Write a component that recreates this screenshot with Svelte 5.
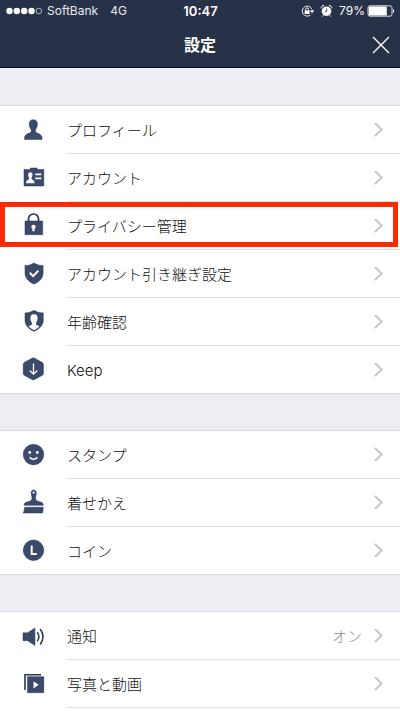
<script lang="ts">
	type Item = { icon: string; label: string; value?: string; marked?: boolean };

	const groups: Item[][] = [
		[
			{ icon: 'profile', label: 'プロフィール' },
			{ icon: 'account', label: 'アカウント' },
			{ icon: 'lock', label: 'プライバシー管理', marked: true },
			{ icon: 'transfer', label: 'アカウント引き継ぎ設定' },
			{ icon: 'age', label: '年齢確認' },
			{ icon: 'keep', label: 'Keep' }
		],
		[
			{ icon: 'stamp', label: 'スタンプ' },
			{ icon: 'theme', label: '着せかえ' },
			{ icon: 'coin', label: 'コイン' }
		],
		[
			{ icon: 'sound', label: '通知', value: 'オン' },
			{ icon: 'media', label: '写真と動画' }
		]
	];
</script>

<div class="app">
	<header>
		<div class="status">
			<div class="carrier">
				<svg width="37" height="8" viewBox="0 0 37 8" aria-hidden="true">
					<circle cx="3.5" cy="4" r="3.2" />
					<circle cx="10.8" cy="4" r="3.2" />
					<circle cx="18.2" cy="4" r="3.2" />
					<circle cx="25.5" cy="4" r="3.2" />
					<circle cx="32.8" cy="4" r="2.8" class="empty" />
				</svg>
				<span>SoftBank</span>
				<span class="network">4G</span>
			</div>
			<time>10:47</time>
			<div class="power">
				<svg width="13" height="14" viewBox="0 0 13 14" aria-hidden="true">
					<path d="M10.8 5A5 5 0 1 0 9.4 11" fill="none" stroke="#e8eaee" />
					<path d="M8.9 6.3h4.2L11 9.2z" />
					<path d="M3.6 6.4h5V10h-5z" />
					<path d="M4.6 6.6V5.4a1.5 1.5 0 0 1 3 0v1.2" fill="none" stroke="#fff" />
				</svg>
				<svg class="alarm" width="13" height="14" viewBox="0 0 13 14" aria-hidden="true">
					<circle cx="6.5" cy="7.2" r="4.8" />
					<path d="M1.2 4.4a2.5 2.5 0 0 1 3-2.8M8.8 1.6a2.5 2.5 0 0 1 3 2.8M3.3 11.2l-1 1.4M9.7 11.2l1 1.4" fill="none" stroke="#fff" />
					<path d="M6.7 4.5v2.9H4.8" fill="none" stroke="#273148" stroke-width=".8" />
				</svg>
				<span>79%</span>
				<svg width="28" height="12" viewBox="0 0 28 12" aria-hidden="true">
					<rect x="1" y=".8" width="24" height="10.4" rx="2" fill="none" stroke="#dfe1e6" />
					<rect x="1.8" y="1.5" width="18" height="9" rx=".6" />
					<path d="M26 4c1.6.6 1.6 3.400 0 4z" />
				</svg>
			</div>
		</div>
		<div class="titlebar">
			<h1>設定</h1>
			<button class="close" type="button" aria-label="閉じる">
				<svg width="18" height="18" viewBox="0 0 18 18" aria-hidden="true">
					<path d="M1 1l16 16M17 1L1 17" fill="none" stroke="#fff" stroke-width="1.4" />
				</svg>
			</button>
		</div>
	</header>

	<main>
		{#each groups as group}
			<ul>
				{#each group as item}
					<li>
						<a href="#{item.icon}" class:marked={item.marked}>
							<svg class="icon" width="25" height="25" viewBox="0 0 25 25" aria-hidden="true">
								{#if item.icon === 'profile'}
									<path d="M12.3 2.7c2.9 0 4.3 2 4.1 4.6-.1 2.2-.8 4-1.9 5.2v2.3c.6 1.7 6.5 2 6.5 5.6v2H3.6v-2c0-3.6 5.9-3.9 6.5-5.6v-2.3C9 11.3 8.3 9.5 8.2 7.3 8 4.7 9.4 2.7 12.3 2.7z" />
								{:else if item.icon === 'account'}
									<path d="M3 4.5h6.4V3h6.8v1.5h6.6V21H3z" />
									<path class="cut" d="M9.3 7.3c1.7 0 2.3 1.2 2.2 2.7-.1 1.2-.5 2.2-1 2.8v1.3c.4.9 3 1 3 3.3v.9H5.2v-.9c0-2.3 2.6-2.4 3-3.3v-1.3c-.6-.6-1-1.6-1-2.8-.1-1.5.5-2.7 2.1-2.7zM14.3 8.6h6v1.7h-6zM14.3 12.5h6v1.7h-6z" />
								{:else if item.icon === 'lock'}
									<path d="M7.500 9V6a5 5 0 0 1 10 0v3" fill="none" stroke="#26365c" stroke-width="1.7" />
									<path d="M4 8h17.7v13.7H4z" />
									<path class="cut" d="M12.5 11.7a2.2 2.2 0 0 1 1.1 4.1v2.5h-2.2v-2.5a2.2 2.2 0 0 1 1.1-4.1z" />
								{:else if item.icon === 'transfer'}
									<path d="M13 2c2.7 1.7 5.7 2.5 9.1 2.6v7.3c0 5.3-4 9.1-9.1 11.1-5-2-9-5.8-9-11.1V4.6C7.3 4.5 10.3 3.7 13 2z" />
									<path d="M8.8 11.8l3.3 3.3 5.2-5.3" fill="none" stroke="#fff" stroke-width="2" />
								{:else if item.icon === 'age'}
									<path d="M13 1.3c2.7 1.7 5.7 2.5 9.3 2.6v7.4c0 5.3-4.2 9-9.3 11-5-2-9-5.7-9-11V3.9C7.3 3.8 10.3 3 13 1.3z" />
									<path class="cut" d="M13 5.2c2.9 0 3.8 2 3.6 4.4-.1 1.9-.8 3.3-1.5 4v1.7c.4 1 1.9 1.2 3.3 2.2-1.5 1.6-3.4 2.7-5.4 3.6-2-.9-3.9-2-5.4-3.6 1.400-1 2.900-1.200 3.300-2.200v-1.700c-.8-.7-1.400-2.100-1.500-4-.2-2.400.7-4.400 3.600-4.400z" />
								{:else if item.icon === 'keep'}
									<path d="M12.3.8q.7 0 1.3.4l7.8 4.4q1 .6 1 1.7v9.2q0 1.1-1 1.7l-7.8 4.4q-1.3.7-2.6 0l-7.8-4.4q-1-.6-1-1.7V7.3q0-1.1 1-1.7L11 1.2q.6-.4 1.3-.4z" />
									<path d="M12.5 6.5v10.4M8.7 13.5l3.8 3.7 3.8-3.7" fill="none" stroke="#fff" stroke-width="1.3" />
								{:else if item.icon === 'stamp'}
									<circle cx="12.5" cy="12.6" r="10.3" />
									<circle class="cut" cx="8.7" cy="10.5" r="1.4" />
									<circle class="cut" cx="16.3" cy="10.5" r="1.4" />
									<path d="M8.6 15.4q3.9 3.6 7.8 0" fill="none" stroke="#fff" stroke-width="1.5" />
								{:else if item.icon === 'theme'}
									<path d="M12.7 0c1.7 0 2.6 1.2 2.6 2.7 0 2.2-.8 3.5-.8 5.3 0 3 2.7 3.3 6.5 4.5q1.3.5 1.3 2.8H3.2q0-2.3 1.3-2.8C8.3 11.3 11 11 11 8c0-1.8-.9-3.1-.9-5.3C10.1 1.2 11 0 12.7 0z" />
									<path d="M3.5 17.3h18.8L21.6 23H2.3q1.2-2.3 1.2-5.7z" />
									<circle class="cut" cx="12.7" cy="2.6" r="1.1" />
								{:else if item.icon === 'coin'}
									<circle cx="12.5" cy="12.2" r="10.3" />
									<path d="M10.7 7.5v8.4h5.1" fill="none" stroke="#fff" stroke-width="2" />
								{:else if item.icon === 'sound'}
									<path d="M2 9.8h4.7L13.9 5v17.5l-7.2-4.8H2z" />
									<path d="M16.2 9.3q3.4 4.5 0 9M19.2 6q5.6 7.7 0 15.5" fill="none" stroke="#26365c" stroke-width="1.5" />
								{:else if item.icon === 'media'}
									<path d="M20 3.7H4V19" fill="none" stroke="#26365c" stroke-width="1.6" />
									<path d="M6.5 5.7h16.3v16H6.5z" />
									<path class="cut" d="M12.5 10.2l5.2 3.6-5.2 3.6z" />
								{/if}
							</svg>
							<span class="label">{item.label}</span>
							{#if item.value}
								<span class="value">{item.value}</span>
							{/if}
							<svg class="chevron" width="9" height="15" viewBox="0 0 9 15" aria-hidden="true">
								<path d="M1 1l6.5 6.5L1 14" fill="none" stroke="#c6c6cb" stroke-width="1.9" />
							</svg>
						</a>
					</li>
				{/each}
			</ul>
		{/each}
	</main>
</div>

<style>
	:global(body) {
		margin: 0;
		background: #eeedf3;
	}
	.app {
		display: flex;
		flex-direction: column;
		min-height: 100vh;
		font-family: Inter, 'Noto Sans CJK JP', sans-serif;
		color: #111;
	}
	header {
		background: #273148;
		border-bottom: 1px solid #050b26;
		color: #fff;
		fill: #fff;
	}
	.status {
		display: grid;
		grid-template-columns: 1fr auto 1fr;
		align-items: center;
		height: 22px;
		padding: 0 5px 0 6px;
		font-size: 12px;
		line-height: 22px;
	}
	.carrier,
	.power {
		display: flex;
		align-items: center;
		gap: 4px;
	}
	.carrier {
		color: #e8eaee;
	}
	.power {
		justify-content: flex-end;
		gap: 2px;
	}
	.alarm {
		margin: 0 4px;
	}
	.empty {
		fill: none;
		stroke: #cfd2da;
		stroke-width: 0.8;
	}
	.network {
		margin-left: 8px;
	}
	time {
		font-weight: 600;
		font-size: 13px;
	}
	.titlebar {
		display: grid;
		grid-template-columns: 1fr auto 1fr;
		align-items: center;
		height: 45px;
		padding: 0 10px;
	}
	h1 {
		grid-column: 2;
		margin: 0;
		font-size: 16px;
		line-height: 24px;
		font-weight: 700;
	}
	.close {
		display: flex;
		justify-self: end;
		padding: 0;
		border: none;
		background: none;
		cursor: pointer;
	}
	main {
		display: flex;
		flex: 1;
		flex-direction: column;
	}
	ul {
		margin: 37px 0 0;
		padding: 0;
		list-style: none;
		background: #fff;
		border-top: 1px solid #dbdae0;
	}
	ul + ul {
		margin-top: 36px;
	}
	ul:last-child {
		flex: 1;
	}
	a {
		position: relative;
		display: flex;
		align-items: center;
		height: 47px;
		padding: 0 17px 0 21px;
		border-bottom: 1px solid transparent;
		color: inherit;
		font-size: 15px;
		line-height: 24px;
		font-weight: 300;
		text-decoration: none;
	}
	a::before {
		content: '';
		position: absolute;
		left: 67px;
		right: 0;
		bottom: -1px;
		height: 1px;
		background: #dfdfe3;
	}
	ul:not(:last-child) li:last-child a::before {
		left: 0;
		background: #dbdae0;
	}
	.marked::after {
		content: '';
		position: absolute;
		inset: 0 2px 2px 0;
		border: 5px solid #ff2a00;
	}
	.icon {
		fill: #3b4a69;
		stroke: #26365c;
		stroke-width: 0.5;
		overflow: visible;
	}
	.cut {
		fill: #fff;
		stroke: none;
	}
	.label,
	.value {
		padding-top: 2px;
	}
	.label {
		flex: 1;
		margin-left: 21px;
	}
	.value {
		color: #8e8e93;
	}
	.chevron {
		margin-left: 12px;
	}
</style>
